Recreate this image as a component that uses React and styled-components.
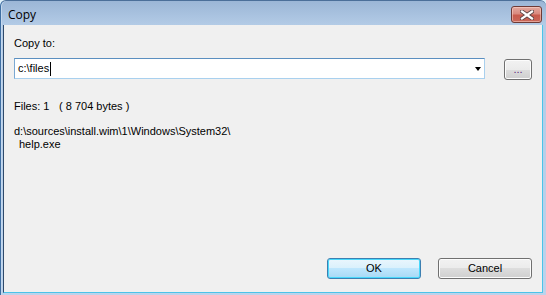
import React from 'react';
import styled, { createGlobalStyle } from 'styled-components';

const GlobalStyle = createGlobalStyle`
    html, body {
        margin: 0;
        padding: 0;
        background: #dff1fb;
    }
    body {
        font-family: 'Liberation Sans', Arial, sans-serif;
        font-size: 11px;
        color: #000;
    }
`;

const CloseIcon = () => (
    <svg width="14" height="10" viewBox="0 0 14 10">
        <path d="M2 1.5 L12 8.5 M12 1.5 L2 8.5" stroke="#5a4444" strokeWidth="4" strokeLinecap="square" />
        <path d="M2 1.5 L12 8.5 M12 1.5 L2 8.5" stroke="#ffffff" strokeWidth="2.2" strokeLinecap="square" />
    </svg>
);

const App = () => {

    return (
        <>
            <GlobalStyle />
            <Window className="window">
                <TitleBar className="titleBar">
                    <Title>Copy</Title>
                    <CloseButton aria-label="Close"><CloseIcon /></CloseButton>
                </TitleBar>
                <Client className="client">
                    <Label>Copy to:</Label>
                    <PathRow>
                        <Combo className="combo">
                            <ComboText>c:\files<Caret /></ComboText>
                            <DropArrow />
                        </Combo>
                        <BrowseButton>...</BrowseButton>
                    </PathRow>
                    <InfoLine>
                        <FilesCount>Files: 1</FilesCount>( 8 704 bytes )
                    </InfoLine>
                    <SourcePath>
                        <div>d:\sources\install.wim\1\Windows\System32\</div>
                        <FileName>help.exe</FileName>
                    </SourcePath>
                    <ButtonRow>
                        <DialogButton primary>OK</DialogButton>
                        <DialogButton>Cancel</DialogButton>
                    </ButtonRow>
                </Client>
            </Window>
        </>
    )
}

export default App

const Window = styled.div`
    width: 546px;
    height: 295px;
    box-sizing: border-box;
    display: flex;
    flex-direction: column;
    background: linear-gradient(#9bb6d6 0px, #b3cbe6 24px, #bcd3ec 100%);
    border-left: 1px solid #3f6fa3;
    border-top: 1px solid #4b6f99;
    border-radius: 6px 6px 0 0;
    box-shadow: inset 1px 0 0 #c4d8ee;
    padding: 0 3px 2px 2px;
`;

const TitleBar = styled.div`
    height: 24px;
    display: flex;
    align-items: center;
    justify-content: space-between;
    padding-left: 5px;
`;

const Title = styled.span`
    font-family: 'Open Sans', 'Noto Sans', sans-serif;
    font-size: 12px;
    color: #000;
    margin-top: 2px;
`;

const CloseButton = styled.div`
    width: 31px;
    height: 17px;
    box-sizing: border-box;
    margin-top: 3px;
    margin-right: 1px;
    border: 1px solid #6e3a36;
    border-radius: 3px;
    background: linear-gradient(#e3a89f 0%, #d98a7f 45%, #c85a4c 55%, #c9685a 100%);
    box-shadow: inset 0 0 0 1px rgba(255, 220, 210, 0.5);
    display: flex;
    align-items: center;
    justify-content: center;
`;

const Client = styled.div`
    flex: 1;
    display: flex;
    flex-direction: column;
    background: #f0f0f0;
    border-left: 1px solid #2f4a6b;
    border-right: 1px solid #4cc3e8;
    border-bottom: 1px solid #4cc3e8;
    padding: 12px 10px 13px 10px;
`;

const Label = styled.div`
    line-height: 13px;
`;

const PathRow = styled.div`
    display: flex;
    align-items: flex-start;
    margin-top: 8px;
`;

const Combo = styled.div`
    width: 471px;
    height: 21px;
    box-sizing: border-box;
    display: flex;
    align-items: center;
    justify-content: space-between;
    background: #fff;
    border: 1px solid #a9d0ee;
    border-top-color: #5b8fc0;
    border-left-color: #7aa8d2;
    padding: 0 3px 0 3px;
`;

const ComboText = styled.span`
    display: flex;
    align-items: center;
    line-height: 13px;
`;

const Caret = styled.span`
    display: inline-block;
    width: 1px;
    height: 14px;
    background: #000;
    margin-left: 1px;
`;

const DropArrow = styled.span`
    width: 0;
    height: 0;
    border-left: 3.5px solid transparent;
    border-right: 3.5px solid transparent;
    border-top: 4px solid #000;
    margin-top: 1px;
`;

const BrowseButton = styled.div`
    width: 28px;
    height: 21px;
    box-sizing: border-box;
    margin-left: 19px;
    margin-top: 1px;
    border: 1px solid #707070;
    border-radius: 3px;
    background: linear-gradient(#f2f2f2 0%, #ebebeb 50%, #dddddd 50%, #cfcfcf 100%);
    box-shadow: inset 0 0 0 1px #fcfcfc;
    display: flex;
    align-items: flex-end;
    justify-content: center;
    padding-bottom: 4px;
    line-height: 11px;
    color: #5a2a7a;
`;

const InfoLine = styled.div`
    margin-top: 20px;
    line-height: 13px;
    white-space: pre;
`;

const FilesCount = styled.span`
    display: inline-block;
    width: 45px;
`;

const SourcePath = styled.div`
    margin-top: 12px;
    line-height: 13px;
`;

const FileName = styled.div`
    padding-left: 5px;
`;

const ButtonRow = styled.div`
    margin-top: auto;
    display: flex;
    justify-content: flex-end;
    gap: 17px;
`;

const DialogButton = styled.div`
    width: 94px;
    height: 21px;
    box-sizing: border-box;
    border: 1px solid ${props => props.primary ? '#3c7fb1' : '#707070'};
    border-radius: 3px;
    background: ${props => props.primary
        ? 'linear-gradient(#eaf6fd 0%, #d9f0fc 50%, #bee6fd 50%, #a7d9f5 100%)'
        : 'linear-gradient(#f2f2f2 0%, #ebebeb 50%, #dddddd 50%, #cfcfcf 100%)'};
    box-shadow: inset 0 0 0 1px ${props => props.primary ? '#48d8fb' : '#fcfcfc'};
    display: flex;
    align-items: center;
    justify-content: center;
    line-height: 13px;
`;
